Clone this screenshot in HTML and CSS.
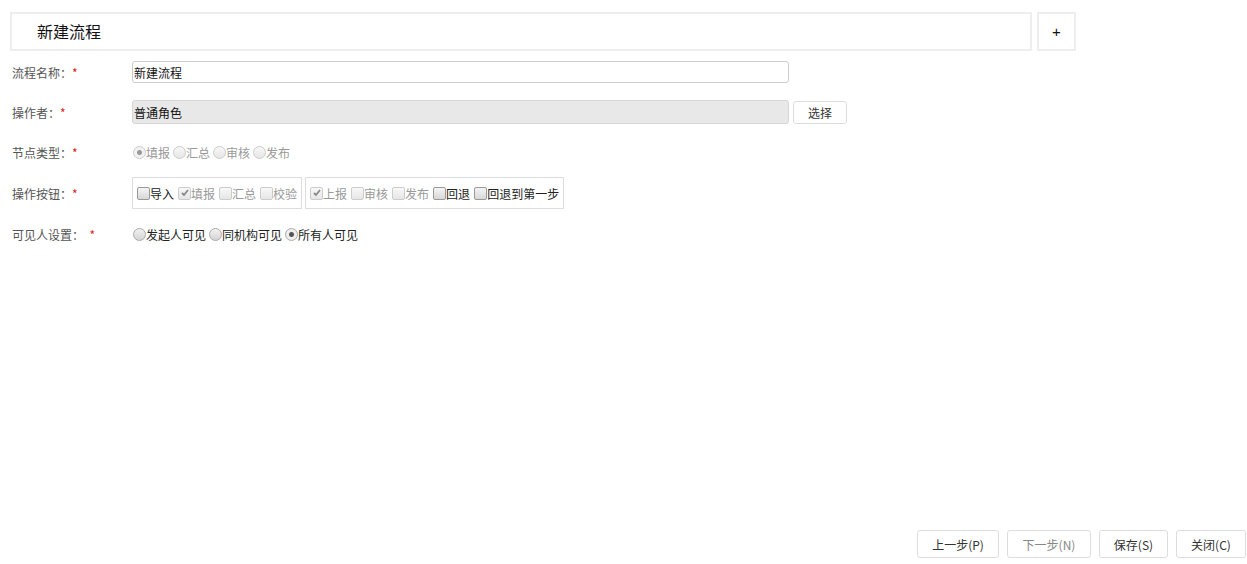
FILE: index.html
```html
<!DOCTYPE html>
<html lang="zh-CN">
<head>
    <meta charset="UTF-8">
    <title>新建流程</title>
    <link rel="stylesheet" href="styles.css">
</head>
<body>
<div class="page">
    <div class="head">
        <div class="title-box">新建流程</div>
        <button class="add-btn">+</button>
    </div>

    <div class="form">
        <div class="row">
            <label class="label">流程名称：<span class="req">*</span></label>
            <input class="text" type="text" value="新建流程">
        </div>
        <div class="row">
            <label class="label">操作者：<span class="req">*</span></label>
            <input class="text readonly" type="text" value="普通角色" readonly>
            <button class="small-btn">选择</button>
        </div>
        <div class="row">
            <label class="label">节点类型：<span class="req">*</span></label>
            <div class="opts">
                <label class="opt off"><input type="radio" name="nodeType" checked disabled>填报</label>
                <label class="opt off"><input type="radio" name="nodeType" disabled>汇总</label>
                <label class="opt off"><input type="radio" name="nodeType" disabled>审核</label>
                <label class="opt off"><input type="radio" name="nodeType" disabled>发布</label>
            </div>
        </div>
        <div class="row row-tall">
            <label class="label">操作按钮：<span class="req">*</span></label>
            <div class="group">
                <label class="opt"><input type="checkbox">导入</label>
                <label class="opt off"><input type="checkbox" checked disabled>填报</label>
                <label class="opt off"><input type="checkbox" disabled>汇总</label>
                <label class="opt off"><input type="checkbox" disabled>校验</label>
            </div>
            <div class="group">
                <label class="opt off"><input type="checkbox" checked disabled>上报</label>
                <label class="opt off"><input type="checkbox" disabled>审核</label>
                <label class="opt off"><input type="checkbox" disabled>发布</label>
                <label class="opt"><input type="checkbox">回退</label>
                <label class="opt"><input type="checkbox">回退到第一步</label>
            </div>
        </div>
        <div class="row">
            <label class="label">可见人设置：&nbsp;&nbsp;<span class="req">*</span></label>
            <div class="opts">
                <label class="opt"><input type="radio" name="visible">发起人可见</label>
                <label class="opt"><input type="radio" name="visible">同机构可见</label>
                <label class="opt"><input type="radio" name="visible" checked>所有人可见</label>
            </div>
        </div>
    </div>

    <div class="footer">
        <button class="btn btn-prev">上一步(P)</button>
        <button class="btn btn-next" disabled>下一步(N)</button>
        <button class="btn btn-save">保存(S)</button>
        <button class="btn btn-close">关闭(C)</button>
    </div>
</div>
</body>
</html>
```

FILE: styles.css
```css
* {
    box-sizing: border-box;
    margin: 0;
    padding: 0;
}

body {
    font-family: "Noto Sans CJK SC", "Liberation Sans", sans-serif;
    font-size: 12px;
    color: #333;
    background: white;
}

.page {
    display: flex;
    flex-direction: column;
    min-height: 100vh;
    padding-bottom: 6px;
}

.head {
    display: flex;
    gap: 5px;
    margin: 12px 0 0 10px;
}

.title-box {
    width: 1022px;
    height: 39px;
    border: 2px solid #eee;
    padding-left: 25px;
    font-size: 16px;
    line-height: 35px;
    color: #111;
}

.add-btn {
    width: 39px;
    height: 39px;
    border: 2px solid #eee;
    background: white;
    font-family: "Liberation Sans", sans-serif;
    font-size: 15px;
    color: #111;
}

.form {
    padding-left: 12px;
    padding-top: 1px;
}

.row {
    display: flex;
    align-items: center;
    height: 40px;
}

.row-tall {
    height: 42px;
}

.label {
    width: 120px;
    flex: none;
    color: #555;
}

.req {
    color: #e02020;
}

.text {
    width: 657px;
    height: 22px;
    border: 1px solid #ccc;
    border-radius: 3px;
    padding: 0 1px;
    font-family: inherit;
    font-size: 12px;
    color: #111;
    outline: none;
}

.text.readonly {
    height: 24px;
    background: #e8e8e8;
    border-color: #d6d6d6;
}

.small-btn {
    width: 54px;
    height: 23px;
    margin-left: 4px;
    border: 1px solid #ddd;
    border-radius: 3px;
    background: white;
    font-family: inherit;
    font-size: 12px;
    color: #333;
}

.opts {
    display: flex;
    align-items: center;
    gap: 3px;
    padding-left: 1px;
}

.group {
    display: flex;
    align-items: center;
    height: 32px;
    border: 1px solid #ddd;
    padding: 0 4px 0 0;
}

.group + .group {
    margin-left: 3px;
}

.group .opt input {
    margin-left: 4px;
}

.opt {
    display: flex;
    align-items: center;
    color: #222;
}

.opt.off {
    color: #999;
}

.opt input {
    appearance: none;
    width: 13px;
    height: 13px;
    border: 1px solid #999;
    background: linear-gradient(#f4f4f4, #d8d8d8);
}

.opt input[type=radio] {
    border-radius: 50%;
    border-color: #aaa;
    background: linear-gradient(#f2f2f2, #d4d4d4);
}

.opt input[type=radio]:checked {
    background: radial-gradient(circle, #555 0, #555 2px, #eee 3px);
}

.opt input[type=checkbox] {
    border-radius: 2px;
}

.opt input:disabled {
    border-color: #ccc;
    background: linear-gradient(#f8f8f8, #e6e6e6);
}

.opt input[type=radio]:disabled:checked {
    background: radial-gradient(circle, #999 0, #999 2px, #f2f2f2 3px);
}

.opt input[type=checkbox]:checked {
    background: url("data:image/svg+xml,%3Csvg xmlns='http://www.w3.org/2000/svg' viewBox='0 0 10 10'%3E%3Cpath d='M2 5l2 2 4-5' fill='none' stroke='%23888' stroke-width='1.8'/%3E%3C/svg%3E") center/10px no-repeat, linear-gradient(#f8f8f8, #e6e6e6);
}

.footer {
    margin-top: auto;
    display: flex;
    justify-content: flex-end;
    gap: 8px;
    padding-right: 1px;
}

.btn {
    height: 28px;
    border: 1px solid #ddd;
    border-radius: 3px;
    background: white;
    font-family: inherit;
    font-size: 12px;
    color: #333;
}

.btn:disabled {
    color: #888;
}

.btn-prev { width: 82px; }
.btn-next { width: 84px; }
.btn-save { width: 69px; }
.btn-close { width: 70px; }
```
